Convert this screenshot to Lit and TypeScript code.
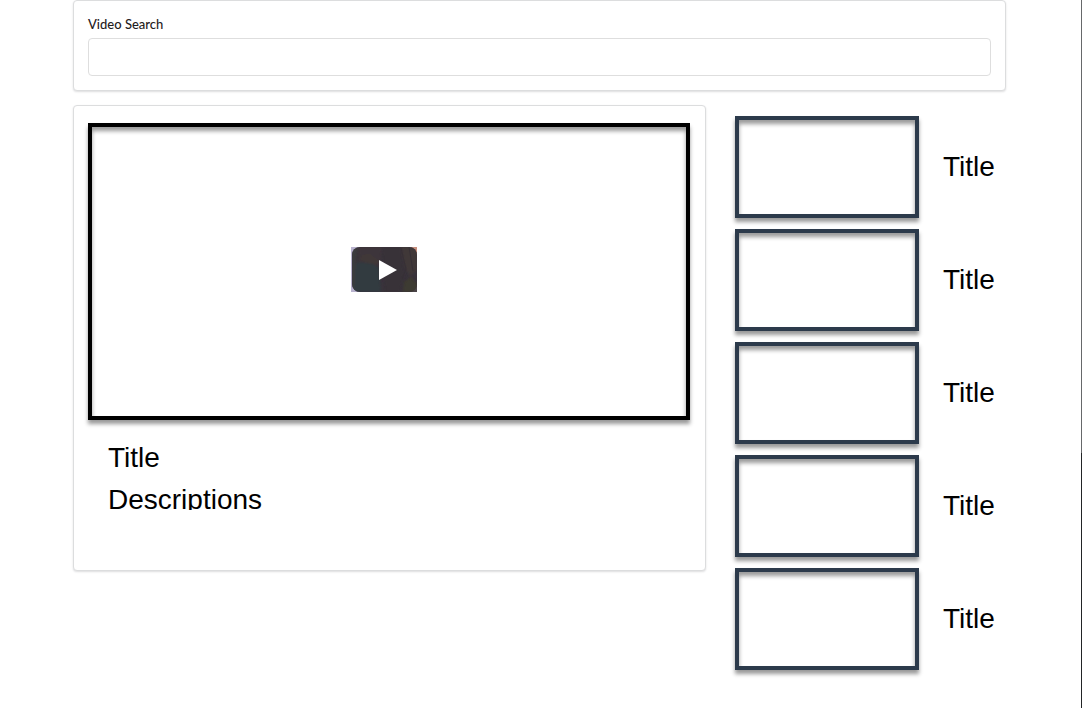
import { LitElement, html, css } from "lit";
import { customElement, property, state } from "lit/decorators.js";

const cardStyles = css`
  * {
    box-sizing: border-box;
  }
  .card {
    border: 1px solid #dcddde;
    border-radius: 4px;
    background: #fff;
    box-shadow: 0 1px 2px rgba(34, 36, 38, 0.15);
    padding: 14px;
  }
  .frame {
    border: 4px solid #2c3a4b;
    box-shadow:
      0 4px 4px rgba(0, 0, 0, 0.4),
      inset 0 4px 4px rgba(0, 0, 0, 0.4);
  }
  .caption {
    margin: 0;
    font-family: "Liberation Sans", Arial, sans-serif;
    font-size: 28px;
    font-weight: 400;
    line-height: 32px;
    color: #000;
  }
`;

@customElement("search-bar")
export class SearchBar extends LitElement {
  static styles = [
    cardStyles,
    css`
      :host {
        display: block;
      }
      .label {
        display: block;
        margin-bottom: 4px;
        font-size: 13px;
        font-weight: 500;
        line-height: 19px;
        color: #1f2021;
      }
      .input {
        display: block;
        width: 100%;
        height: 38px;
        padding: 0 14px;
        border: 1px solid #dedede;
        border-radius: 4px;
        background: #fff;
        font: inherit;
        outline: none;
      }
      .input:focus {
        border-color: #85b7d9;
      }
    `,
  ];

  @state() private term = "";

  render() {
    return html`
      <form class="card" @submit=${(e: Event) => e.preventDefault()}>
        <label class="label" for="term">Video Search</label>
        <input
          class="input"
          id="term"
          type="text"
          .value=${this.term}
          @input=${(e: Event) => (this.term = (e.target as HTMLInputElement).value)}
        />
      </form>
    `;
  }
}

@customElement("video-detail")
export class VideoDetail extends LitElement {
  static styles = [
    cardStyles,
    css`
      :host {
        display: block;
      }
      .card {
        padding: 17px 15px 60px 14px;
      }
      .player {
        display: flex;
        align-items: center;
        justify-content: center;
        height: 297px;
        padding: 0 10px 4px 0;
        border-color: #000;
      }
      .play {
        display: block;
        padding: 0;
        border: 0;
        background: none;
        cursor: pointer;
      }
      .play svg {
        display: block;
      }
      .info {
        padding: 22px 20px 0;
      }
      .description {
        height: 26px;
        margin-top: 10px;
        overflow: hidden;
      }
    `,
  ];

  @property() heading = "";
  @property() description = "";

  render() {
    return html`
      <article class="card">
        <div class="frame player">
          <button class="play" type="button" aria-label="Play">
            <svg width="66" height="45" viewBox="0 0 66 45">
              <defs>
                <linearGradient id="still" x1="0" x2="1">
                  <stop offset="0" stop-color="#b9b3cf" />
                  <stop offset="0.5" stop-color="#a59bb0" />
                  <stop offset="1" stop-color="#c98f7c" />
                </linearGradient>
                <clipPath id="pill"><rect x="1" width="65" height="45" rx="8" /></clipPath>
                <filter id="soft" x="-20%" y="-20%" width="140%" height="140%">
                  <feGaussianBlur stdDeviation="1.2" />
                </filter>
              </defs>
              <rect width="66" height="45" fill="url(#still)" />
              <rect x="58" y="36" width="8" height="9" fill="#4a4446" />
              <g clip-path="url(#pill)">
                <rect width="66" height="45" fill="#38323a" />
                <g filter="url(#soft)">
                  <path d="M7 0H31L29 19L22 17L8 15Z" fill="#3e353b" />
                  <path d="M11 8L19 7L28 14L24 18L10 13Z" fill="#413937" />
                  <path d="M1 18L8 15L22 17L28 21L30 45H1Z" fill="#333a40" />
                  <path d="M31 0H50L53 26L49 45H34Z" fill="#383039" />
                  <path d="M50 0H66V23L59 29L54 20Z" fill="#413738" />
                  <path d="M53 35L60 30L66 37V45H52Z" fill="#3e3a30" />
                  <path d="M0 0H6L3 45H0Z" fill="#3b3b3d" />
                </g>
                <path d="M50 1L55 22L51 32M58 0L62 24" fill="none" stroke="#373036" />
              </g>
              <path d="M28 13L46 23L28 33Z" fill="#fff" />
            </svg>
          </button>
        </div>
        <div class="info">
          <h1 class="caption">${this.heading}</h1>
          <p class="caption description">${this.description}</p>
        </div>
      </article>
    `;
  }
}

@customElement("video-list")
export class VideoList extends LitElement {
  static styles = [
    cardStyles,
    css`
      :host {
        display: block;
      }
      .list {
        display: flex;
        flex-direction: column;
        gap: 11px;
        margin: 0;
        padding: 11px 0 0;
        list-style: none;
      }
      .item {
        display: flex;
        align-items: center;
        gap: 24px;
      }
      .thumb {
        flex: none;
        width: 184px;
        height: 102px;
      }
    `,
  ];

  @property({ attribute: false }) videos: string[] = [];

  render() {
    return html`
      <ul class="list">
        ${this.videos.map(
          (title) => html`
            <li class="item">
              <div class="frame thumb"></div>
              <h2 class="caption">${title}</h2>
            </li>
          `
        )}
      </ul>
    `;
  }
}

@customElement("app-root")
export class AppRoot extends LitElement {
  static styles = css`
    :host {
      display: flex;
      min-height: 100vh;
      background: #fff;
      font-family: Lato, sans-serif;
    }
    .page {
      flex: 1;
      min-width: 0;
      padding: 0 75px 0 73px;
    }
    .columns {
      display: grid;
      grid-template-columns: minmax(0, 1fr) 271px;
      align-items: start;
      gap: 29px;
      margin-top: 14px;
    }
    .edge {
      flex: none;
      width: 1px;
      background: linear-gradient(#66686a 64%, #222426 64%);
    }
  `;

  private videos = ["Title", "Title", "Title", "Title", "Title"];

  render() {
    return html`
      <main class="page">
        <search-bar></search-bar>
        <div class="columns">
          <video-detail heading="Title" description="Descriptions"></video-detail>
          <video-list .videos=${this.videos}></video-list>
        </div>
      </main>
      <div class="edge"></div>
    `;
  }
}
